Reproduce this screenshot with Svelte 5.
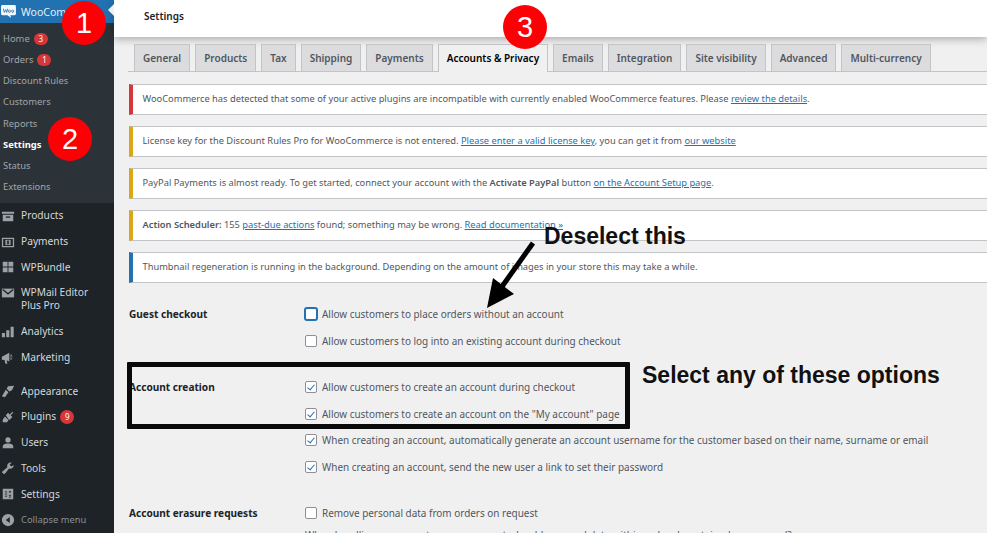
<script>
  const submenu = [
    { label: "Home", badge: 3 },
    { label: "Orders", badge: 1 },
    { label: "Discount Rules" },
    { label: "Customers" },
    { label: "Reports" },
    { label: "Settings", current: true },
    { label: "Status" },
    { label: "Extensions" },
  ];

  const tabs = ["General", "Products", "Tax", "Shipping", "Payments", "Accounts & Privacy", "Emails", "Integration", "Site visibility", "Advanced", "Multi-currency"];
</script>

<div class="page">
  <aside class="sidebar">
    <div class="woo">
      <svg class="woo-logo" viewBox="0 0 16 14" width="15" height="13">
        <path d="M1.500 0h13A1.500 1.500 0 0 1 16 1.500v8a1.500 1.500 0 0 1-1.500 1.500H10l.8 3L7 11H1.500A1.500 1.500 0 0 1 0 9.500v-8A1.500 1.500 0 0 1 1.500 0z" fill="#f4f8fb" />
        <path d="M2.500 4l1 4 1.500-3 1 3 1.200-4M9 5.500a1 1.300 0 1 0 .01 0M12.500 5.500a1 1.300 0 1 0 .01 0" fill="none" stroke="#2271b1" stroke-width=".9" />
      </svg>
      <span>WooComm</span>
    </div>
    <ul class="submenu">
      {#each submenu as item}
        <li class:current={item.current}>
          {item.label}
          {#if item.badge}<span class="badge">{item.badge}</span>{/if}
        </li>
      {/each}
    </ul>

    <ul class="menu first">
      <li>
        <svg viewBox="0 0 16 16"><path d="M1 3h14v2.500H1zM2 6.500h12V14H2z" /><path d="M5.500 8.500h5V10h-5z" fill="#1d2327" /></svg>
        <span>Products</span>
      </li>
      <li>
        <svg viewBox="0 0 16 16"><path fill-rule="evenodd" d="M1 3h14v11H1zM2.500 4.500v8h11v-8z" /><path d="M5 5.500h6v6H5z" /><path d="M9.500 7H7.200v1.500h1.600V10H6.500M8 6.200v4.600" fill="none" stroke="#1d2327" stroke-width=".9" /></svg>
        <span>Payments</span>
      </li>
      <li>
        <svg viewBox="0 0 16 16"><path d="M2 2h5.500v5.500H2zM8.500 2H14v5.500H8.500zM2 8.500h5.500V14H2zM8.500 8.500H14V14H8.500z" /></svg>
        <span>WPBundle</span>
      </li>
      <li class="tall">
        <svg viewBox="0 0 16 16"><path d="M1 3h14v10H1z" /><path d="M2 4l6 5 6-5" fill="none" stroke="#1d2327" stroke-width="1.500" /></svg>
        <span>WPMail Editor<br />Plus Pro</span>
      </li>
      <li>
        <svg viewBox="0 0 16 16"><path d="M1 9h3.500v5H1zM6 6h3.500v8H6zM11 2h3.500v12H11z" /></svg>
        <span>Analytics</span>
      </li>
      <li>
        <svg viewBox="0 0 16 16"><path d="M1 6.500l8.500-4.500v10L6.500 10.500l.8 4H5L4 10.300 1 10z" /><path fill-rule="evenodd" d="M11 3.500a4 4 0 0 1 0 7zM11.800 5.200v3.600a2 2 0 0 0 0-3.600z" /></svg>
        <span>Marketing</span>
      </li>
    </ul>

    <ul class="menu second">
      <li>
        <svg viewBox="0 0 16 16"><path d="M8 2.500l7-.5-2.500 5-3 1.500L6.500 5.500zM5.500 6.500l3 3L4.500 15l-3.500-1z" /></svg>
        <span>Appearance</span>
      </li>
      <li>
        <svg viewBox="0 0 16 16"><path d="M8 3l2 2 3-3 1 1-3 3 2 2-3 3h-1L5.500 6zM4.500 7.500l4 4L7 14H2v-3z" /></svg>
        <span>Plugins</span>
        <span class="badge big">9</span>
      </li>
      <li>
        <svg viewBox="0 0 16 16"><circle cx="8" cy="4.500" r="3" /><path d="M2 14v-2.500C2 10 4 8.500 8 8.500s6 1.500 6 3V14z" /></svg>
        <span>Users</span>
      </li>
      <li>
        <svg viewBox="0 0 16 16"><path d="M14.500 4.500a4 4 0 0 1-5.300 4.200L4 15l-2.500-1.500-.5-1L7.200 7a4 4 0 0 1 5-5L9.800 4.400l2 2z" /></svg>
        <span>Tools</span>
      </li>
      <li>
        <svg viewBox="0 0 16 16"><path d="M2 2h12v12H2z" /><path d="M4.500 5.500h2.500M4.500 8h2.500M9 5.500h2.500M10.250 4.500v2M9 9.500h2.500M9 11.500h2.500M4.500 10.500h2.500" fill="none" stroke="#1d2327" stroke-width="1" /></svg>
        <span>Settings</span>
      </li>
      <li class="collapse">
        <svg viewBox="0 0 16 16"><path fill-rule="evenodd" d="M8 1a7 7 0 1 1 0 14A7 7 0 0 1 8 1zM10 4.500L5.500 8l4.500 3.500z" /></svg>
        <span>Collapse menu</span>
      </li>
    </ul>
  </aside>

  <div class="arrow-in"></div>

  <main class="content">
    <header class="topbar">Settings</header>

    <nav class="tabs">
      {#each tabs as tab}
        <span class="tab" class:active={tab === "Accounts & Privacy"}>{tab}</span>
      {/each}
    </nav>

    <section class="notices">
      <p class="notice red">WooCommerce has detected that some of your active plugins are incompatible with currently enabled WooCommerce features. Please <a href="#top">review the details</a>.</p>
      <p class="notice yellow">License key for the Discount Rules Pro for WooCommerce is not entered. <a href="#top">Please enter a valid license key</a>, you can get it from <a href="#top">our website</a></p>
      <p class="notice yellow">PayPal Payments is almost ready. To get started, connect your account with the <b>Activate PayPal</b> button <a href="#top">on the Account Setup page</a>.</p>
      <p class="notice yellow"><b>Action Scheduler:</b> 155 <a href="#top">past-due actions</a> found; something may be wrong. <a href="#top">Read documentation »</a></p>
      <p class="notice blue">Thumbnail regeneration is running in the background. Depending on the amount of images in your store this may take a while.</p>
    </section>

    <section class="settings">
      <div class="group">
        <h3>Guest checkout</h3>
        <div class="options">
          <label><span class="box focus"></span>Allow customers to place orders without an account</label>
          <label><span class="box"></span>Allow customers to log into an existing account during checkout</label>
        </div>
      </div>
      <div class="group">
        <h3>Account creation</h3>
        <div class="options">
          <label><span class="box on"></span>Allow customers to create an account during checkout</label>
          <label><span class="box on"></span>Allow customers to create an account on the "My account" page</label>
          <label><span class="box on"></span>When creating an account, automatically generate an account username for the customer based on their name, surname or email</label>
          <label><span class="box on"></span>When creating an account, send the new user a link to set their password</label>
        </div>
      </div>
      <div class="group">
        <h3>Account erasure requests</h3>
        <div class="options">
          <label><span class="box"></span>Remove personal data from orders on request</label>
          <label class="clipped">When handling an account erasure request, should personal data within orders be retained or removed?</label>
        </div>
      </div>
    </section>
  </main>

  <!-- annotations drawn on top of the screenshot -->
  <span class="step one">1</span>
  <span class="step two">2</span>
  <span class="step three">3</span>
  <div class="outline"></div>
  <span class="note deselect">Deselect this</span>
  <span class="note select">Select any of these options</span>
  <svg class="pointer" viewBox="0 0 60 80" width="60" height="80">
    <path d="M50 3L18 48" stroke="#000" stroke-width="5" fill="none" />
    <path d="M4 68L10 38 31 54z" fill="#000" />
  </svg>
</div>

<style>
  :global(body) {
    margin: 0;
    overflow: hidden;
  }

  .page {
    position: relative;
    display: flex;
    width: 987px;
    height: 533px;
    overflow: hidden;
    background: #f0f0f1;
    font-family: "Noto Sans", sans-serif;
    font-size: 10px;
    color: #50575e;
  }

  .sidebar {
    flex: none;
    width: 114px;
    background: #1d2327;
    color: #f0f0f1;
  }

  .woo {
    display: flex;
    align-items: center;
    gap: 5px;
    height: 23px;
    padding-left: 1px;
    background: #2271b1;
    color: #e6f0f7;
    font-size: 10.500px;
  }

  ul {
    margin: 0;
    padding: 0;
    list-style: none;
  }

  .submenu {
    height: 180px;
    padding-top: 5px;
    box-sizing: border-box;
    background: #2c3338;
    color: #a0a5aa;
  }

  .submenu li {
    display: flex;
    align-items: center;
    gap: 4px;
    height: 21.150px;
    padding-left: 3px;
    font-size: 9.400px;
  }

  .submenu li.current {
    color: #fff;
    font-weight: 700;
  }

  .badge {
    display: inline-block;
    width: 14px;
    height: 12px;
    border-radius: 7px;
    background: #d63638;
    color: #fff;
    font-size: 8px;
    line-height: 12px;
    text-align: center;
  }

  .badge.big {
    width: 14px;
    height: 14px;
    margin-left: -2px;
    line-height: 14px;
  }

  .menu li {
    display: flex;
    align-items: center;
    gap: 6px;
    height: 25.700px;
    padding-left: 1px;
    color: #d5d8da;
    font-size: 10.200px;
    line-height: 13px;
  }

  .menu li.tall {
    height: 39px;
    align-items: flex-start;
    padding-top: 6px;
    box-sizing: border-box;
  }

  .menu svg {
    flex: none;
    width: 14px;
    height: 14px;
    fill: #9ca1a6;
  }

  .first {
    margin-bottom: 8px;
  }

  .collapse {
    color: #8c8f94 !important;
    font-size: 9.400px !important;
  }

  .arrow-in {
    position: absolute;
    left: 108px;
    top: 4px;
    border: 6px solid transparent;
    border-left: 0;
    border-right-color: #f0f0f1;
  }

  .content {
    flex: 1;
    min-width: 0;
  }

  .topbar {
    height: 37px;
    box-sizing: border-box;
    padding: 9px 0 0 30px;
    background: #fff;
    box-shadow: 0 2px 8px rgba(0, 0, 0, 0.3);
    color: #1d2327;
    font-size: 10px;
    font-weight: 600;
  }

  .tabs {
    display: flex;
    gap: 5px;
    margin: 7px 0 0 14px;
    padding-left: 6px;
    height: 27px;
    border-bottom: 1px solid #c3c4c7;
  }

  .tab {
    padding: 0 8px;
    height: 26px;
    line-height: 27px;
    border: 1px solid #c3c4c7;
    border-bottom: 0;
    background: #dcdcde;
    color: #50575e;
    font-size: 10px;
    font-weight: 600;
  }

  .tab.active {
    height: 27px;
    background: #f0f0f1;
    color: #000;
  }

  .notices {
    display: flex;
    flex-direction: column;
    gap: 11px;
    margin: 12px 0 0 15px;
  }

  .notice {
    margin: 0;
    height: 31px;
    box-sizing: border-box;
    padding-left: 9.500px;
    border: 1px solid #c3c4c7;
    border-left: 4px solid;
    border-right: 0;
    background: #fff;
    font-size: 9.300px;
    line-height: 28px;
    white-space: nowrap;
  }

  .notice b {
    font-weight: 600;
  }

  .notice a {
    color: #2271b1;
  }

  .red { border-left-color: #d63638; }
  .yellow { border-left-color: #dba617; }
  .blue { border-left-color: #2271b1; }

  .settings {
    margin: 24px 0 0 15px;
  }

  .group {
    display: flex;
    margin-bottom: 32px;
  }

  h3 {
    flex: none;
    width: 176px;
    margin: 0;
    color: #1d2327;
    font-size: 10.100px;
    font-weight: 700;
    line-height: 14px;
  }

  .options {
    display: flex;
    flex-direction: column;
    gap: 12.800px;
  }

  label {
    display: flex;
    align-items: center;
    gap: 5px;
    height: 14px;
    font-size: 9.950px;
    white-space: nowrap;
  }

  .box {
    flex: none;
    position: relative;
    width: 10px;
    height: 10px;
    border: 1px solid #8c8f94;
    border-radius: 2px;
    background: #fff;
  }

  .box.focus {
    border-color: #2271b1;
    box-shadow: 0 0 0 1px #2271b1;
  }

  .box.on::after {
    content: "";
    position: absolute;
    left: 3px;
    top: 1px;
    width: 3px;
    height: 6px;
    border: solid #2271b1;
    border-width: 0 1.500px 1.500px 0;
    transform: rotate(40deg);
  }

  .clipped {
    margin-top: -5px;
  }

  .step {
    position: absolute;
    width: 44px;
    height: 44px;
    border-radius: 50%;
    background: #fd0006;
    color: #fff;
    font-family: "Liberation Sans", sans-serif;
    font-size: 29px;
    line-height: 44px;
    text-align: center;
  }

  .one { left: 62px; top: 1px; }
  .two { left: 48px; top: 117px; }
  .three { left: 503px; top: 5px; }

  .outline {
    position: absolute;
    left: 127px;
    top: 362px;
    width: 493px;
    height: 57px;
    border: 5px solid #0a0a0a;
    border-radius: 1px;
  }

  .note {
    position: absolute;
    color: #111;
    font-family: "Liberation Sans", sans-serif;
    font-size: 23px;
    font-weight: 700;
    white-space: nowrap;
  }

  .deselect { left: 544px; top: 223px; }
  .select { left: 642px; top: 362px; }

  .pointer {
    position: absolute;
    left: 483px;
    top: 240px;
  }
</style>
